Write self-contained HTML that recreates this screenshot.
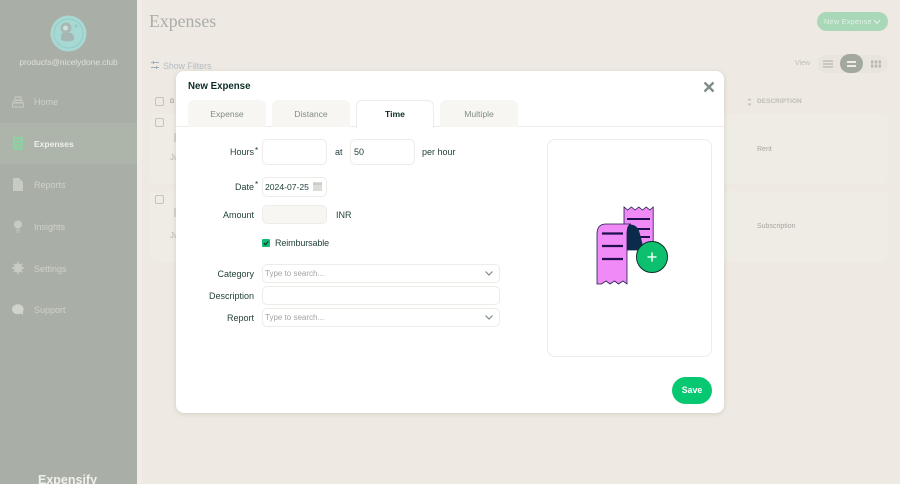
<!DOCTYPE html>
<html lang="en">
<head>
<meta charset="utf-8">
<title>New Expense</title>
<style>
html,body{margin:0;padding:0;width:900px;height:484px;overflow:hidden;background:#eee9e2}
#w{position:relative;width:900px;height:484px;overflow:hidden;background:#eee9e2;font-family:"Liberation Sans",sans-serif;color:#0b2d27}
.a{position:absolute;white-space:nowrap}
.nav{left:34px;font-size:9px;color:#cfd2cb;line-height:12px}
.lab{font-size:9px;color:#23403a;text-align:right;right:646px;line-height:12px}
.ast{font-size:8px;color:#0b2d27;line-height:8px}
.box{box-sizing:border-box;border:1px solid #efece7;border-radius:5px;background:#fff}
.tab{top:100px;width:78px;height:27px;box-sizing:border-box;border-radius:6px 6px 0 0;background:#f8f6f2;text-align:center;font-size:8.6px;line-height:29px;color:#7f8d88}
.ph{font-size:8px;color:#a0a4a0;line-height:12px}
</style>
</head>
<body>
<div id="w">
<!-- sidebar -->
<div class="a" style="left:0;top:0;width:137px;height:484px;background:#a9aea6"></div>
<div class="a" style="left:0;top:123px;width:137px;height:41px;background:#adb4aa"></div>
<div class="a" style="left:137px;top:0;width:5px;height:484px;background:#f0ece6"></div>
<svg class="a" style="left:50px;top:15px" width="37" height="37" viewBox="0 0 37 37">
<circle cx="18.5" cy="18.5" r="18" fill="#a6d9d3"/>
<circle cx="18.5" cy="18.5" r="14.5" fill="none" stroke="#94c4bf" stroke-width=".7"/>
<circle cx="16" cy="13" r="5.5" fill="#a9b8b4"/>
<circle cx="15.5" cy="13" r="2.500" fill="#cfdfdb"/>
<path d="M12 18h10l2 3v4q-7 3-13 0v-4z" fill="#a6b6b2"/>
<path d="M26 9v4M24 11h4" stroke="#94c4bf" stroke-width=".8"/>
</svg>
<div class="a" style="left:0;width:137px;text-align:center;top:56px;font-size:8.4px;line-height:12px;color:#dfe1db">products@nicelydone.club</div>

<svg class="a" style="left:12px;top:96px" width="12" height="12" viewBox="0 0 12 12"><path d="M3 1h6v3H3zM2 4.500h8v2H2zM.5 7h11v4H.5z" fill="none" stroke="#c6c9c2" stroke-width="1"/></svg>
<div class="a nav" style="top:96px">Home</div>
<svg class="a" style="left:13px;top:137px" width="10" height="13" viewBox="0 0 10 13"><rect width="10" height="13" rx="1" fill="#8fd0a2"/><path d="M2 3h6M2 6.500h6M2 10h6" stroke="#adb4aa" stroke-width="1"/></svg>
<div class="a nav" style="top:137.500px;color:#eef0ea;font-weight:bold;font-size:8.5px">Expenses</div>
<svg class="a" style="left:13px;top:178px" width="10" height="13" viewBox="0 0 10 13"><path d="M0 0h6l4 4v9H0z" fill="#c8cbc4"/></svg>
<div class="a nav" style="top:179px">Reports</div>
<svg class="a" style="left:13px;top:220px" width="10" height="13" viewBox="0 0 10 13"><circle cx="5" cy="4.500" r="4" fill="#c8cbc4"/><path d="M3 10h4M3.500 12h3" stroke="#c8cbc4" stroke-width="1"/></svg>
<div class="a nav" style="top:221px">Insights</div>
<svg class="a" style="left:12px;top:262px" width="12" height="12" viewBox="0 0 12 12"><circle cx="6" cy="6" r="3.200" fill="none" stroke="#c8cbc4" stroke-width="2.200"/><path d="M6 0v12M0 6h12M1.800 1.800l8.400 8.400M10.200 1.800l-8.400 8.400" stroke="#c8cbc4" stroke-width="1.500"/></svg>
<div class="a nav" style="top:262.500px">Settings</div>
<svg class="a" style="left:12px;top:304px" width="12" height="12" viewBox="0 0 12 12"><ellipse cx="5.800" cy="5.300" rx="5.800" ry="5" fill="#d0d3cc"/><path d="M8 8l3 3v-5z" fill="#d0d3cc"/></svg>
<div class="a nav" style="top:304px">Support</div>
<div class="a" style="left:38px;top:473px;font-size:12.5px;line-height:15px;font-weight:bold;color:#f0f1ec">Expensify</div>

<!-- main page behind -->
<div class="a" style="left:149px;top:10px;font-family:'Liberation Serif',serif;font-size:17.8px;line-height:22px;color:#a9aea6">Expenses</div>
<div class="a" style="left:817px;top:12px;width:71px;height:19px;border-radius:10px;background:#a9d8b9"></div>
<div class="a" style="left:824px;top:16.500px;font-size:7.400px;line-height:10px;color:#e2efe5;letter-spacing:.2px">New Expense</div>
<svg class="a" style="left:873px;top:19px" width="8" height="6" viewBox="0 0 8 6"><path d="M1 1l3 3.500L7 1" fill="none" stroke="#e2efe5" stroke-width="1.200"/></svg>
<svg class="a" style="left:151px;top:61px" width="8" height="8" viewBox="0 0 8 8"><path d="M0 1.500h8M0 6.500h8M2.500 0v3M5.500 5v3" stroke="#a3afba" stroke-width="1"/></svg>
<div class="a" style="left:163px;top:60px;font-size:8.800px;line-height:12px;color:#b3bcc4">Show Filters</div>
<div class="a" style="left:795px;top:58.500px;font-size:7px;line-height:10px;color:#bcbdb6">View</div>
<div class="a" style="left:817px;top:55px;width:71px;height:18px;border-radius:9px;background:#e9e5dd"></div>
<div class="a" style="left:840px;top:54px;width:23px;height:19px;border-radius:10px;background:#a3a89f"></div>
<svg class="a" style="left:823px;top:60px" width="10" height="8" viewBox="0 0 10 8"><path d="M0 1h10M0 4h10M0 7h10" stroke="#b5b6ae" stroke-width="1.200"/></svg>
<svg class="a" style="left:846px;top:60px" width="11" height="8" viewBox="0 0 11 8"><path d="M1 2h9M1 6h9" stroke="#ecebe4" stroke-width="2"/></svg>
<svg class="a" style="left:871px;top:60px" width="10" height="8" viewBox="0 0 10 8"><path d="M0 2h10M0 6h10" stroke="#b5b6ae" stroke-width="3" stroke-dasharray="2.400 1.400"/></svg>
<div class="a" style="left:155px;top:97px;width:7px;height:7px;border:1px solid #c5c3bc;border-radius:2px"></div>
<div class="a" style="left:170px;top:98px;font-size:6px;line-height:8px;color:#a9a9a2;font-weight:bold">D</div>
<svg class="a" style="left:747px;top:97px" width="5" height="10" viewBox="0 0 5 10"><path d="M2.500 1L4.500 3.500H.5zM2.500 9L.5 6.500h4z" fill="#c2c1ba"/></svg>
<div class="a" style="left:757px;top:97px;font-size:6.400px;line-height:9px;color:#bebdb6;font-weight:bold;letter-spacing:.1px">DESCRIPTION</div>
<div class="a" style="left:149px;top:114px;width:739px;height:70px;border-radius:7px;background:#efece5"></div>
<div class="a" style="left:149px;top:191px;width:739px;height:71px;border-radius:7px;background:#efece5"></div>
<div class="a" style="left:155px;top:118px;width:7px;height:7px;border:1px solid #c5c3bc;border-radius:2px"></div>
<div class="a" style="left:155px;top:195px;width:7px;height:7px;border:1px solid #c5c3bc;border-radius:2px"></div>
<div class="a" style="left:174px;top:133px;width:3px;height:9px;background:#d5d3cc"></div>
<div class="a" style="left:174px;top:208px;width:3px;height:9px;background:#d5d3cc"></div>
<div class="a" style="left:170px;top:153px;font-size:8px;line-height:10px;color:#b8b7b0">Ju</div>
<div class="a" style="left:170px;top:231px;font-size:8px;line-height:10px;color:#b8b7b0">Ju</div>
<div class="a" style="left:757px;top:144.500px;font-size:7px;line-height:9px;color:#a5a59e">Rent</div>
<div class="a" style="left:757px;top:222px;font-size:7px;line-height:10px;color:#a5a59e">Subscription</div>

<!-- modal -->
<div class="a" style="left:176px;top:71px;width:548px;height:342px;background:#fff;border-radius:8px;box-shadow:0 1px 5px rgba(90,85,70,.18)"></div>
<div class="a" style="left:188px;top:79.500px;font-size:9.700px;line-height:14px;font-weight:bold;color:#0b2d27">New Expense</div>
<svg class="a" style="left:703px;top:81px" width="12" height="12" viewBox="0 0 12 12"><path d="M1.500 1.500l9 9M10.500 1.500l-9 9" stroke="#7f8d88" stroke-width="2.400"/></svg>
<div class="a" style="left:176px;top:126px;width:548px;height:1px;background:#efece7"></div>
<div class="a tab" style="left:188px">Expense</div>
<div class="a tab" style="left:272px">Distance</div>
<div class="a tab" style="left:356px;background:#fff;border:1px solid #efece7;border-bottom:none;color:#0b2d27;font-weight:bold;line-height:27px;height:28px">Time</div>
<div class="a tab" style="left:440px">Multiple</div>

<div class="a lab" style="top:146px">Hours</div><div class="a ast" style="left:255px;top:147px">*</div>
<div class="a box" style="left:262px;top:139px;width:65px;height:26px"></div>
<div class="a lab" style="left:335px;right:auto;top:146px">at</div>
<div class="a box" style="left:350px;top:139px;width:65px;height:26px"></div>
<div class="a lab" style="left:354px;right:auto;top:146px">50</div>
<div class="a lab" style="left:422px;right:auto;top:146px">per hour</div>

<div class="a lab" style="top:181px">Date</div><div class="a ast" style="left:255px;top:181px">*</div>
<div class="a box" style="left:262px;top:177px;width:65px;height:20px"></div>
<div class="a lab" style="left:265px;right:auto;top:181px;font-size:8.600px">2024-07-25</div>
<svg class="a" style="left:313px;top:182px" width="9" height="9" viewBox="0 0 9 9"><rect width="9" height="9" fill="#dcdcd8"/><path d="M0 2h9" stroke="#bdbdb9" stroke-width="1"/></svg>

<div class="a lab" style="top:209px">Amount</div>
<div class="a box" style="left:262px;top:205px;width:65px;height:19px;background:#f8f6f2"></div>
<div class="a lab" style="left:336px;right:auto;top:209px">INR</div>

<svg class="a" style="left:262px;top:239px" width="8" height="8" viewBox="0 0 8 8"><rect width="8" height="8" rx="1" fill="#12bd76"/><path d="M1.800 4l1.700 1.800L6.300 2.200" fill="none" stroke="#0b2d27" stroke-width="1.100"/></svg>
<div class="a lab" style="left:275px;right:auto;top:237px;letter-spacing:-.13px">Reimbursable</div>

<div class="a lab" style="top:268px">Category</div>
<div class="a box" style="left:262px;top:264px;width:238px;height:19px"></div>
<div class="a ph" style="left:265px;top:268px">Type to search...</div>
<svg class="a" style="left:485px;top:271px" width="8" height="5" viewBox="0 0 8 5"><path d="M.5.500L4 4l3.500-3.500" fill="none" stroke="#7f8d88" stroke-width="1.200"/></svg>
<div class="a lab" style="top:290px">Description</div>
<div class="a box" style="left:262px;top:286px;width:238px;height:19px"></div>
<div class="a lab" style="top:312px">Report</div>
<div class="a box" style="left:262px;top:308px;width:238px;height:19px"></div>
<div class="a ph" style="left:265px;top:312px">Type to search...</div>
<svg class="a" style="left:485px;top:315px" width="8" height="5" viewBox="0 0 8 5"><path d="M.5.500L4 4l3.500-3.500" fill="none" stroke="#7f8d88" stroke-width="1.200"/></svg>

<div class="a box" style="left:547px;top:139px;width:165px;height:218px;border-radius:8px"></div>

<svg class="a" style="left:590px;top:200px" width="85" height="90" viewBox="590 200 85 90">
<path d="M624 250V207l3.700 3 3.700-3 3.700 3 3.700-3 3.700 3 3.700-3 3.700 3 3.300-3V250z" fill="#f08af7" stroke="#1f1b4d" stroke-width=".8"/>
<path d="M627 219h23M627 229h23M627 237h23" stroke="#1f1050" stroke-width="2"/>
<path d="M627 250V226q3-2 6-1 5 1 7 9l4 16z" fill="#0c2a4a"/>
<path d="M597 284V234q0-10 9-10h25q-4 1-4 10v50l-4-3-4.500 3-4-3-4.500 3-4-3-4.500 3z" fill="#f08af7" stroke="#1f1b4d" stroke-width=".8"/>
<path d="M602 233.500h21M602 246h21M602 259h21" stroke="#1f1050" stroke-width="2.200"/>
<circle cx="652" cy="257" r="15.500" fill="#0dc06f" stroke="#0b2d27" stroke-width="1"/>
<path d="M652 252.500v9M647.500 257h9" stroke="#e6fff0" stroke-width="1.600"/>
</svg>

<div class="a" style="left:672px;top:377px;width:40px;height:27px;border-radius:14px;background:#06c870;color:#fff;font-size:8.800px;font-weight:bold;text-align:center;line-height:27px">Save</div>
</div>
</body>
</html>
